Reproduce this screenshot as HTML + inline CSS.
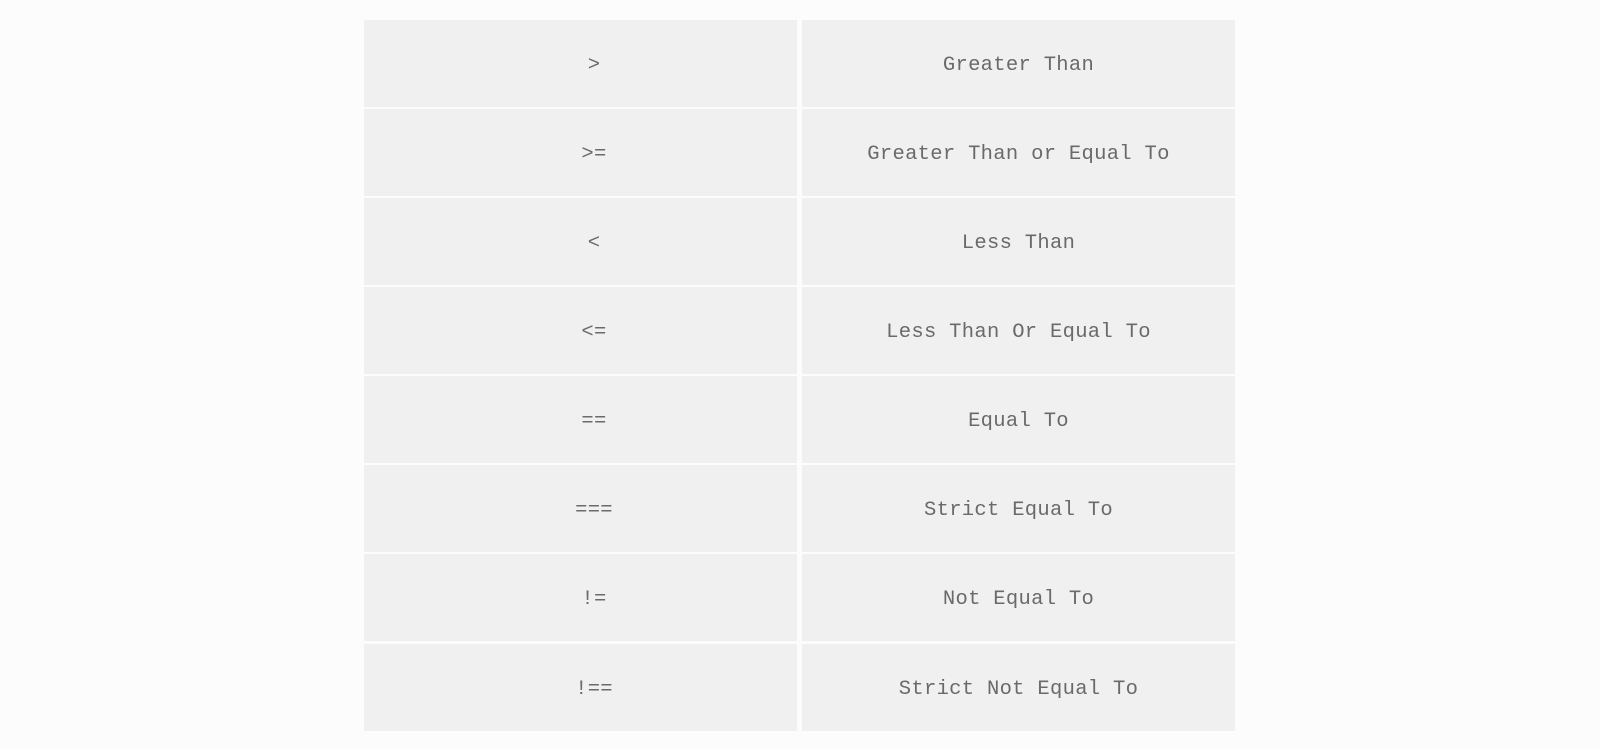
<!DOCTYPE html>
<html><head><style>
html,body{margin:0;padding:0;background:#fcfcfc;width:1600px;height:749px;overflow:hidden}
.c{position:absolute;background:#f0f0f0;color:#6a6a6a;font-family:"Liberation Mono",monospace;font-size:20.5px;letter-spacing:0.3px;display:flex;align-items:center;justify-content:center;box-sizing:border-box;padding-top:3px;height:87px;width:433px}
.l{left:364px;padding-left:27px}.r{left:802px}
</style></head><body>
<div class="c l" style="top:20px">&gt;</div>
<div class="c r" style="top:20px">Greater Than</div>
<div class="c l" style="top:109px">&gt;=</div>
<div class="c r" style="top:109px">Greater Than or Equal To</div>
<div class="c l" style="top:198px">&lt;</div>
<div class="c r" style="top:198px">Less Than</div>
<div class="c l" style="top:287px">&lt;=</div>
<div class="c r" style="top:287px">Less Than Or Equal To</div>
<div class="c l" style="top:376px">==</div>
<div class="c r" style="top:376px">Equal To</div>
<div class="c l" style="top:465px">===</div>
<div class="c r" style="top:465px">Strict Equal To</div>
<div class="c l" style="top:554px">!=</div>
<div class="c r" style="top:554px">Not Equal To</div>
<div class="c l" style="top:644px">!==</div>
<div class="c r" style="top:644px">Strict Not Equal To</div>
</body></html>
